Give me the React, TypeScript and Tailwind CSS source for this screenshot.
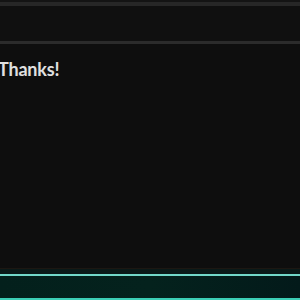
export default function App() {
  return (
    <div className="flex h-[300px] w-[300px] flex-col overflow-hidden bg-[#0e0e0e] font-['Lato',sans-serif]">
      {/* top bars */}
      <div className="h-[2px] bg-[#141414]" />
      <div className="h-[4px] bg-[#272727]" />
      <div className="h-[35px] bg-[#101010]" />
      <div className="h-[3px] bg-[#2b2b2b]" />

      {/* message */}
      <div className="flex-1 pt-[14px]">
        <p className="-ml-[2px] text-[18px] font-bold leading-[22px] tracking-[-0.2px] text-[#e0e0e0]">Thanks!</p>
      </div>

      {/* bottom bar */}
      <div className="h-[1px] bg-[#1c1712]" />
      <div className="h-[5px] bg-[#0a1918]" />
      <div className="h-[2px] bg-[#72d8c9]" />
      <div className="h-[22px] bg-gradient-to-r from-[#03201c] via-[#04221d] to-[#031a1a]" />
      <div className="h-[2px] bg-[#3ccfb6]" />
    </div>
  );
}
